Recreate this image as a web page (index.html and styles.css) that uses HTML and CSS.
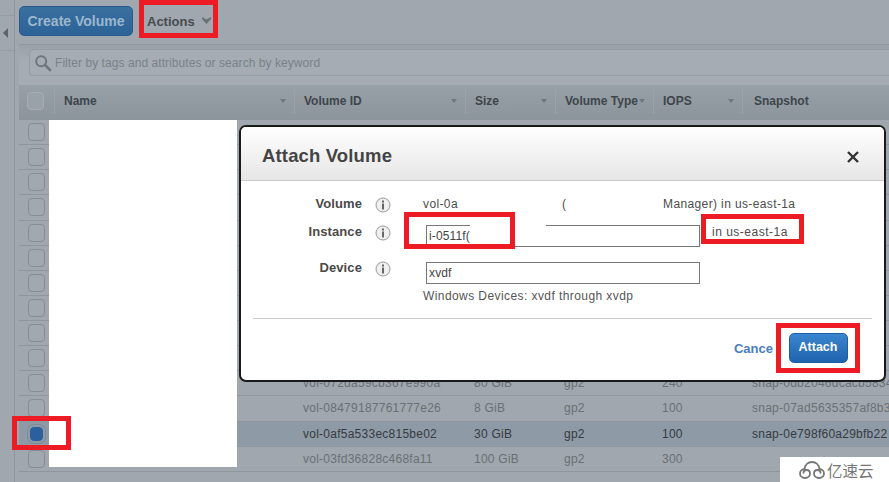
FILE: index.html
```html
<!DOCTYPE html>
<html lang="en">
<head>
<meta charset="utf-8">
<title>Attach Volume</title>
<link rel="stylesheet" href="styles.css">
</head>
<body>
<div class="page">
  <aside class="side">
    <div class="side-band"><span class="collapse"></span></div>
  </aside>
  <main class="main">
    <div class="toolbar">
      <button class="create">Create Volume</button>
      <div class="actions">Actions <svg class="caret-big" width="9" height="7" viewBox="0 0 9 7"><path d="M0 0l4.500 2.500L9 0v2L4.500 7 0 2z" fill="#6a7279"/></svg></div>
    </div>
    <div class="filter">
      <div class="search">
        <svg class="mag" width="18" height="18" viewBox="0 0 18 18"><circle cx="7.2" cy="7.2" r="5" fill="none" stroke="#6f777e" stroke-width="2"/><path d="M11 11l5 5" stroke="#6f777e" stroke-width="2.6" stroke-linecap="round"/></svg>
        <span>Filter by tags and attributes or search by keyword</span>
      </div>
    </div>
    <div class="thead">
      <div class="cell-check"><span class="check"></span></div>
      <div class="th name">Name<i></i></div>
      <div class="th vid">Volume ID<i></i></div>
      <div class="th size">Size<i></i></div>
      <div class="th type">Volume Type<i></i></div>
      <div class="th iops">IOPS<i></i></div>
      <div class="th snap">Snapshot</div>
    </div>
    <div class="tbody">
      <div class="row"><div class="cell-check"><span class="check"></span></div><div class="td name"></div><div class="td vid"></div><div class="td size"></div><div class="td type"></div><div class="td iops"></div><div class="td snap"></div></div>
      <div class="row"><div class="cell-check"><span class="check"></span></div><div class="td name"></div><div class="td vid"></div><div class="td size"></div><div class="td type"></div><div class="td iops"></div><div class="td snap"></div></div>
      <div class="row"><div class="cell-check"><span class="check"></span></div><div class="td name"></div><div class="td vid"></div><div class="td size"></div><div class="td type"></div><div class="td iops"></div><div class="td snap"></div></div>
      <div class="row"><div class="cell-check"><span class="check"></span></div><div class="td name"></div><div class="td vid"></div><div class="td size"></div><div class="td type"></div><div class="td iops"></div><div class="td snap"></div></div>
      <div class="row"><div class="cell-check"><span class="check"></span></div><div class="td name"></div><div class="td vid"></div><div class="td size"></div><div class="td type"></div><div class="td iops"></div><div class="td snap"></div></div>
      <div class="row"><div class="cell-check"><span class="check"></span></div><div class="td name"></div><div class="td vid"></div><div class="td size"></div><div class="td type"></div><div class="td iops"></div><div class="td snap"></div></div>
      <div class="row"><div class="cell-check"><span class="check"></span></div><div class="td name"></div><div class="td vid"></div><div class="td size"></div><div class="td type"></div><div class="td iops"></div><div class="td snap"></div></div>
      <div class="row"><div class="cell-check"><span class="check"></span></div><div class="td name"></div><div class="td vid"></div><div class="td size"></div><div class="td type"></div><div class="td iops"></div><div class="td snap"></div></div>
      <div class="row"><div class="cell-check"><span class="check"></span></div><div class="td name"></div><div class="td vid"></div><div class="td size"></div><div class="td type"></div><div class="td iops"></div><div class="td snap"></div></div>
      <div class="row"><div class="cell-check"><span class="check"></span></div><div class="td name"></div><div class="td vid"></div><div class="td size"></div><div class="td type"></div><div class="td iops"></div><div class="td snap"></div></div>
      <div class="row"><div class="cell-check"><span class="check"></span></div><div class="td name"></div><div class="td vid">vol-072da59cb367e990a</div><div class="td size">80 GiB</div><div class="td type">gp2</div><div class="td iops">240</div><div class="td snap">snap-0db2046dcacb5834</div></div>
      <div class="row"><div class="cell-check"><span class="check"></span></div><div class="td name"></div><div class="td vid">vol-08479187761777e26</div><div class="td size">8 GiB</div><div class="td type">gp2</div><div class="td iops">100</div><div class="td snap">snap-07ad5635357af8b3</div></div>
      <div class="row selected"><div class="cell-check"><span class="check on"></span></div><div class="td name"></div><div class="td vid">vol-0af5a533ec815be02</div><div class="td size">30 GiB</div><div class="td type">gp2</div><div class="td iops">100</div><div class="td snap">snap-0e798f60a29bfb22</div></div>
      <div class="row"><div class="cell-check"><span class="check"></span></div><div class="td name"></div><div class="td vid">vol-03fd36828c468fa11</div><div class="td size">100 GiB</div><div class="td type">gp2</div><div class="td iops">300</div><div class="td snap"></div></div>
    </div>
  </main>
</div>

<div class="mask"></div>

<section class="modal">
  <header class="modal-head">
    <h2>Attach Volume</h2>
    <svg class="close" width="14" height="14" viewBox="0 0 14 14"><path d="M2 2l10 10M12 2L2 12" stroke="#333" stroke-width="2.400"/></svg>
  </header>
  <div class="modal-body">
    <div class="form-row first">
      <label>Volume</label>
      <svg class="info" width="16" height="16" viewBox="0 0 16 16"><circle cx="8" cy="8" r="7" fill="#efefef" stroke="#9a9a9a"/><rect x="7" y="6.500" width="2" height="6" fill="#666"/><rect x="7" y="3.500" width="2" height="2" fill="#666"/></svg>
      <div class="value"><span class="v1">vol-0a</span><span class="v2">(</span><span>Manager) in us-east-1a</span></div>
    </div>
    <div class="form-row second">
      <label>Instance</label>
      <svg class="info" width="16" height="16" viewBox="0 0 16 16"><circle cx="8" cy="8" r="7" fill="#efefef" stroke="#9a9a9a"/><rect x="7" y="6.500" width="2" height="6" fill="#666"/><rect x="7" y="3.500" width="2" height="2" fill="#666"/></svg>
      <div class="field">i-0511f(</div>
      <span class="zone">in us-east-1a</span>
    </div>
    <div class="form-row third">
      <label>Device</label>
      <svg class="info" width="16" height="16" viewBox="0 0 16 16"><circle cx="8" cy="8" r="7" fill="#efefef" stroke="#9a9a9a"/><rect x="7" y="6.500" width="2" height="6" fill="#666"/><rect x="7" y="3.500" width="2" height="2" fill="#666"/></svg>
      <div class="field">xvdf</div>
    </div>
    <p class="help">Windows Devices: xvdf through xvdp</p>
    <div class="divider"></div>
    <footer class="modal-foot">
      <a class="cancel">Cance</a>
      <div class="attach-frame"><button class="attach">Attach</button></div>
    </footer>
  </div>
  <div class="erase"></div>
  <div class="red instance-box"></div>
  <div class="red zone-box"></div>
</section>

<div class="red actions-box"></div>
<div class="red check-box"></div>

<div class="watermark">
  <svg width="26" height="18" viewBox="0 0 26 18"><path d="M6 17C3 17 1 15 1 12.500S3 8 5.500 8C6 4 9 1 13 1s7 3 7.500 7C23 8 25 10 25 12.500S23 17 20 17s-5-2-5-4.500 1.500-3.500 3.500-3.500 3 1.300 3 2.800M6 17c3 0 5-2 5-4.500S9.500 9 7.500 9s-3 1.300-3 2.800" fill="none" stroke="#777" stroke-width="1.800" stroke-linecap="round"/></svg>
  <span>亿速云</span>
</div>
</body>
</html>
```
FILE: styles.css
```css
* { box-sizing: border-box; }
html, body { margin: 0; height: 100%; }
body {
  width: 889px;
  height: 482px;
  overflow: hidden;
  position: relative;
  background: #a0a7ae;
  font-family: "Liberation Sans", Arial, sans-serif;
}
.page { display: flex; height: 482px; }

.side { width: 15px; flex: none; border-right: 1px solid #8e959c; }
.side-band {
  height: 36px;
  margin-top: 15px;
  border-top: 1px solid #959ca3;
  border-bottom: 1px solid #959ca3;
  display: flex;
  align-items: center;
  padding-left: 3px;
}
.collapse {
  width: 0; height: 0;
  border-top: 5px solid transparent;
  border-bottom: 5px solid transparent;
  border-right: 5px solid #5c646b;
}

.main { flex: 1; padding-left: 4px; min-width: 0; }

.toolbar {
  height: 45px;
  padding-top: 6px;
  display: flex;
  align-items: flex-start;
  gap: 14px;
  border-bottom: 1px solid #8f969d;
}
.create {
  width: 114px;
  height: 30px;
  padding: 0;
  border: 1px solid #2a5a8c;
  border-radius: 5px;
  background: linear-gradient(#38709f, #2d6398);
  color: #9db6cc;
  font: bold 14px "Liberation Sans", Arial, sans-serif;
}
.actions {
  height: 30px;
  display: flex;
  align-items: center;
  gap: 7px;
  color: #454c53;
  font-size: 13px;
  font-weight: bold;
  padding-top: 1px;
}
.caret-big { margin-top: -3px; }

.filter {
  height: 40px;
  padding: 4px 0 0 10px;
  background: linear-gradient(#9aa1a8, #a5acb3 40%);
}
.search {
  height: 27px;
  display: flex;
  align-items: center;
  gap: 3px;
  padding-left: 4px;
  border: 1px solid #959ca3;
  border-right: 0;
  border-radius: 4px 0 0 4px;
  background: #a5acb3;
  color: #7a8289;
  font-size: 12px;
  letter-spacing: .06px;
}

.thead {
  height: 35px;
  display: flex;
  align-items: center;
  padding-bottom: 4px;
  background: linear-gradient(#98a0a7, #8d959c);
  color: #3e454b;
  font-size: 12px;
  font-weight: bold;
}
.row {
  height: 25.140px;
  display: flex;
  align-items: center;
  border-bottom: 1px solid #8f969d;
  color: #6a7076;
  font-size: 12px;
  letter-spacing: .25px;
}
.row.selected { background: #8f9aa7; color: #353b41; }

.cell-check { width: 35px; flex: none; padding-left: 9px; display: flex; align-items: center; }
.check {
  width: 17px; height: 18px;
  border: 1px solid #868d94;
  border-radius: 4px;
  background: #a1a8af;
  display: block;
}
.thead .check { margin-left: -1px; background: #9aa2a9; border-color: #a7aeb5; }
.check.on {
  border: 2px solid #8f9aa7;
  border-radius: 6px;
  background: #2b609c;
  background-clip: padding-box;
  box-shadow: 0 0 0 1px #7f8b99;
}

.name { width: 240px; }
.vid { width: 171px; }
.size { width: 90px; }
.type { width: 98px; }
.iops { width: 89px; }
.snap { flex: 1; min-width: 0; white-space: nowrap; overflow: hidden; }

.th {
  height: 26px;
  display: flex;
  align-items: center;
  justify-content: space-between;
  padding: 0 8px 0 9px;
  border-left: 1px solid #9ba2a9;
}
.th.snap { padding-left: 11px; }
.th i {
  width: 0; height: 0;
  border-left: 3px solid transparent;
  border-right: 3px solid transparent;
  border-top: 4px solid #6f777e;
}
.td { padding-left: 9px; white-space: nowrap; }
.td.snap { padding-left: 10px; }

.mask {
  position: absolute;
  left: 49px; top: 120px;
  width: 188px; height: 347px;
  background: #fff;
}

.modal {
  position: absolute;
  left: 239px; top: 125px;
  width: 647px; height: 257px;
  border: 2px solid #1a1a1a;
  border-radius: 7px;
  background: #fff;
  color: #444;
}
.modal-head {
  height: 54px;
  display: flex;
  align-items: center;
  justify-content: space-between;
  padding: 0 24px 0 21px;
  background: linear-gradient(#fff, #e6e6e6);
  border-bottom: 1px solid #ccc;
  border-radius: 5px 5px 0 0;
}
.modal-head h2 { margin: 5px 0 0; font-size: 18.500px; letter-spacing: .15px; font-weight: bold; color: #444; }
.close { margin-top: 7px; }

.modal-body { padding: 16px 12px 0; }
.form-row { display: flex; align-items: flex-start; margin-left: -12px; }
.form-row.first { height: 28px; }
.form-row.second { height: 37px; }
.form-row.third { height: 22px; }
.form-row label {
  width: 121px;
  flex: none;
  text-align: right;
  font-size: 13px;
  line-height: 14px;
  font-weight: bold;
  letter-spacing: .1px;
  color: #4a4a4a;
}
.third label { margin-top: -1px; }
.third .info { margin-top: -1px; }
.info { flex: none; margin-left: 13px; }
.value { margin-left: 32px; font-size: 12px; line-height: 14px; color: #4c4c4c; display: flex; letter-spacing: .38px; }
.v1 { width: 139px; }
.v2 { width: 101px; }
.field {
  width: 274px;
  height: 22px;
  margin-left: 35px;
  padding-left: 2px;
  border: 1px solid #777;
  font-size: 12px;
  line-height: 20px;
  color: #444;
  letter-spacing: .15px;
}
.zone { margin: 0 0 0 12px; font-size: 12px; line-height: 14px; letter-spacing: .5px; color: #4c4c4c; }
.help { margin: 4px 0 0 170px; font-size: 12px; line-height: 16px; letter-spacing: .42px; color: #555; }
.divider { margin-top: 14px; height: 1px; background: #ccc; }
.modal-foot { display: flex; justify-content: flex-end; align-items: center; padding: 4px 12px 0 0; }
.cancel { margin-right: 3px; color: #4a7ebf; font-size: 13px; font-weight: bold; }
.attach-frame {
  width: 84px; height: 50px;
  display: flex;
  align-items: center;
  justify-content: center;
  border: 5px solid #ed1c24;
}
.attach {
  width: 59px; height: 30px;
  padding: 0 0 2px;
  border: 1px solid #1c5ea8;
  border-radius: 5px;
  background: linear-gradient(#3a85cf, #1f63ad);
  color: #fff;
  font: bold 12.500px "Liberation Sans", Arial, sans-serif;
}

.erase {
  position: absolute;
  left: 229px; top: 96px;
  width: 76px; height: 4px;
  background: #fff;
}
.red { position: absolute; border: 5px solid #ed1c24; }
.instance-box { left: 163px; top: 85px; width: 111px; height: 37px; }
.zone-box { left: 460px; top: 87px; width: 103px; height: 30px; }
.actions-box { left: 139px; top: 0; width: 79px; height: 38px; }
.check-box { left: 12px; top: 416px; width: 59px; height: 34px; }

.watermark {
  position: absolute;
  left: 780px; top: 457px;
  width: 109px; height: 25px;
  background: #fff;
  display: flex;
  align-items: center;
  gap: 2px;
  padding-left: 19px;
  color: #777;
  font-family: "Noto Sans CJK SC", sans-serif;
  font-size: 15.500px;
}
```
